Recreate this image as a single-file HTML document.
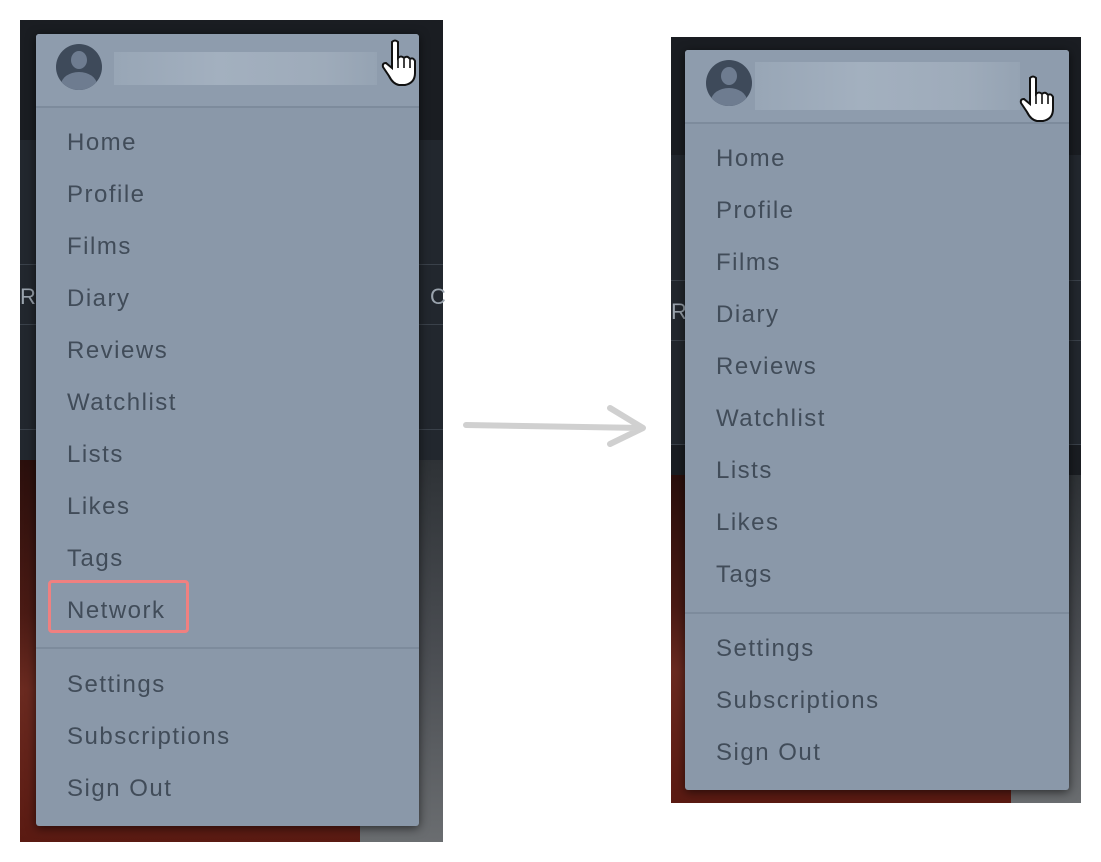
<!DOCTYPE html>
<html><head><meta charset="utf-8"><style>
*{margin:0;padding:0;box-sizing:border-box}
body{width:1101px;height:862px;background:#fff;position:relative;overflow:hidden;font-family:"Liberation Sans",sans-serif}
.abs{position:absolute}
.menu{position:absolute;background:#8a98a9;border-radius:3px;box-shadow:0 2px 10px rgba(0,0,0,.6)}
.hdr{position:absolute;left:0;top:0;right:0;background:#8e9cad;border-bottom:2px solid #7d8b9c;border-radius:3px 3px 0 0}
.it{position:absolute;left:31px;height:28px;line-height:28px;font-size:24px;color:#414c59;letter-spacing:1.5px;white-space:nowrap}
.div{position:absolute;left:0;right:0;height:2px;background:#7d8b9c}
.av{position:absolute;width:46px;height:46px;border-radius:50%;background:#3e4a5a;overflow:hidden}
.av:before{content:"";position:absolute;left:15px;top:7px;width:16px;height:18px;border-radius:50%;background:#6e7c90}
.av:after{content:"";position:absolute;left:5px;top:28px;width:36px;height:26px;border-radius:50%;background:#6e7c90}
.name{position:absolute;background:linear-gradient(90deg,#98a6b6,#a3b0bf 40%,#9eabba 80%,#95a3b3)}
</style></head><body>

<div class="abs" style="left:20px;top:20px;width:423px;height:822px;background:#1a1d22"></div>
<div class="abs" style="left:20px;top:140px;width:423px;height:320px;background:#22272e"></div>
<div class="abs" style="left:20px;top:264px;width:423px;height:1px;background:#3a414a"></div>
<div class="abs" style="left:20px;top:324px;width:423px;height:1px;background:#3a414a"></div>
<div class="abs" style="left:20px;top:429px;width:423px;height:1px;background:#3a414a"></div>
<div class="abs" style="left:20px;top:460px;width:340px;height:382px;background:linear-gradient(180deg,#2a0f0c,#4a1a14 40%,#6a2a20 60%,#5a1a12)"></div>
<div class="abs" style="left:360px;top:460px;width:83px;height:382px;background:linear-gradient(180deg,#2e3236,#4a4d52 50%,#6a6d70)"></div>
<div class="abs" style="left:20px;top:284px;color:#9aa3ad;font-size:22px">R</div>
<div class="abs" style="left:430px;top:284px;color:#9aa3ad;font-size:22px">C</div>

<div class="menu" style="left:36px;top:34px;width:383px;height:792px">
  <div class="hdr" style="height:74px"></div>
  <div class="av" style="left:20px;top:10px"></div>
  <div class="name" style="left:78px;top:18px;width:263px;height:33px"></div>
  <div class="it" style="top:95px">Home</div>
  <div class="it" style="top:147px">Profile</div>
  <div class="it" style="top:199px">Films</div>
  <div class="it" style="top:251px">Diary</div>
  <div class="it" style="top:303px">Reviews</div>
  <div class="it" style="top:355px">Watchlist</div>
  <div class="it" style="top:407px">Lists</div>
  <div class="it" style="top:459px">Likes</div>
  <div class="it" style="top:511px">Tags</div>
  <div class="it" style="top:563px">Network</div>
  <div class="div" style="top:613px"></div>
  <div class="it" style="top:637px">Settings</div>
  <div class="it" style="top:689px">Subscriptions</div>
  <div class="it" style="top:741px">Sign Out</div>
</div>
<div class="abs" style="left:48px;top:580px;width:141px;height:53px;border:3px solid #f08080;border-radius:4px"></div>

<svg class="abs" style="left:380px;top:38px" width="40" height="52" viewBox="0 0 40 52">
<path d="M12 4 q3-3 6 0 v16 q3-3 6 0 q3-3 6 1 q3-2 5 2 v12 q0 10-10 12 h-6 q-6-1-10-9 l-6-9 q-1-4 3-4 l6 5 z" fill="#fff" stroke="#111" stroke-width="2"/>
<path d="M18 20 v10 M24 21 v9 M30 22 v8" stroke="#111" stroke-width="1.6"/>
</svg>

<svg class="abs" style="left:460px;top:400px" width="200" height="50">
<path d="M6 25 L183 28 M150 8 L183 28 L150 44" stroke="#d0d0d0" stroke-width="6" fill="none" stroke-linecap="round" stroke-linejoin="round"/>
</svg>

<div class="abs" style="left:671px;top:37px;width:410px;height:766px;background:#1a1d22"></div>
<div class="abs" style="left:671px;top:155px;width:410px;height:290px;background:#22272e"></div>
<div class="abs" style="left:671px;top:280px;width:410px;height:1px;background:#3a414a"></div>
<div class="abs" style="left:671px;top:340px;width:410px;height:1px;background:#3a414a"></div>
<div class="abs" style="left:671px;top:444px;width:410px;height:1px;background:#3a414a"></div>
<div class="abs" style="left:671px;top:475px;width:340px;height:328px;background:linear-gradient(180deg,#2a0f0c,#4a1a14 40%,#6a2a20 60%,#5a1a12)"></div>
<div class="abs" style="left:1011px;top:475px;width:70px;height:328px;background:linear-gradient(180deg,#2e3236,#4a4d52 50%,#6a6d70)"></div>
<div class="abs" style="left:671px;top:299px;color:#9aa3ad;font-size:22px">R</div>

<div class="menu" style="left:685px;top:50px;width:384px;height:740px">
  <div class="hdr" style="height:74px"></div>
  <div class="av" style="left:21px;top:10px"></div>
  <div class="name" style="left:70px;top:12px;width:265px;height:48px"></div>
  <div class="it" style="top:95px">Home</div>
  <div class="it" style="top:147px">Profile</div>
  <div class="it" style="top:199px">Films</div>
  <div class="it" style="top:251px">Diary</div>
  <div class="it" style="top:303px">Reviews</div>
  <div class="it" style="top:355px">Watchlist</div>
  <div class="it" style="top:407px">Lists</div>
  <div class="it" style="top:459px">Likes</div>
  <div class="it" style="top:511px">Tags</div>
  <div class="div" style="top:562px"></div>
  <div class="it" style="top:585px">Settings</div>
  <div class="it" style="top:637px">Subscriptions</div>
  <div class="it" style="top:689px">Sign Out</div>
</div>

<svg class="abs" style="left:1018px;top:74px" width="40" height="52" viewBox="0 0 40 52">
<path d="M12 4 q3-3 6 0 v16 q3-3 6 0 q3-3 6 1 q3-2 5 2 v12 q0 10-10 12 h-6 q-6-1-10-9 l-6-9 q-1-4 3-4 l6 5 z" fill="#fff" stroke="#111" stroke-width="2"/>
<path d="M18 20 v10 M24 21 v9 M30 22 v8" stroke="#111" stroke-width="1.6"/>
</svg>
</body></html>
